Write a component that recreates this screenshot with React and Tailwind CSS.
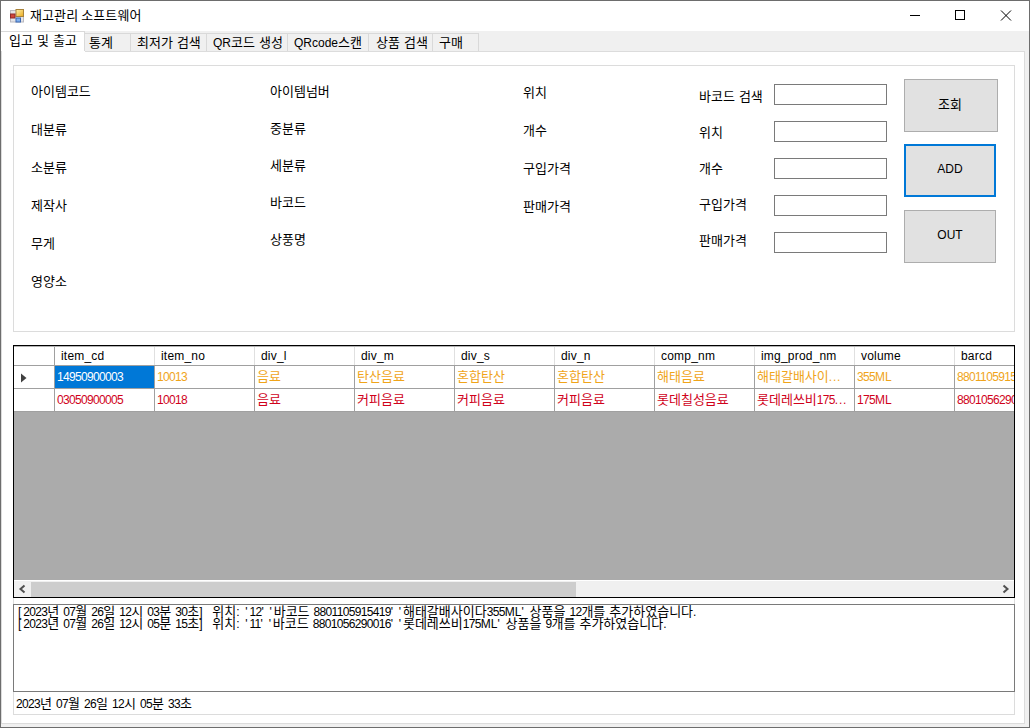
import React from 'react';

const HANGUL = /[가-힣]/;
const RUNS = /[가-힣]+|[0-9]+|[\[\]':.]+|[^가-힣0-9\[\]':.]+/g;

function runClass(run) {
  if (HANGUL.test(run)) return "font-['Noto_Sans_CJK_KR',sans-serif] text-[13px]";
  if (/[0-9]/.test(run)) return "font-['Liberation_Sans',sans-serif] text-[12px] tracking-[-0.67px]";
  if (/[.]/.test(run)) return "font-['Liberation_Sans',sans-serif] text-[12px] tracking-[0.8px]";
  if (/[\[\]':]/.test(run)) return "font-['Liberation_Sans',sans-serif] text-[12px] tracking-[1.8px]";
  return "font-['Liberation_Sans',sans-serif] text-[12px] [word-spacing:0.67px]";
}

function T({ children, className = '' }) {
  return (
    <span className={`whitespace-pre ${className}`}>
      {children.match(RUNS).map((run, i) => (
        <span key={i} className={runClass(run)}>{run}</span>
      ))}
    </span>
  );
}

const tabs = [
  ['통계', 'w-[46px] pl-[4px]'],
  ['최저가 검색', 'w-[76px] pl-[6px]'],
  ['QR코드 생성', 'w-[81px] pl-[6px]'],
  ['QRcode스캔', 'w-[81px] pl-[6px]'],
  ['상품 검색', 'w-[64px] pl-[7px]'],
  ['구매', 'w-[46px] pl-[6px]'],
];

const columns = ['item_cd', 'item_no', 'div_l', 'div_m', 'div_s', 'div_n', 'comp_nm', 'img_prod_nm', 'volume', 'barcd'];

const rows = [
  {
    color: 'text-[#f0a419]',
    cells: ['14950900003', '10013', '음료', '탄산음료', '혼합탄산', '혼합탄산', '해태음료', '해태갈배사이...', '355ML', '8801105915419'],
  },
  {
    color: 'text-[#d0021b]',
    cells: ['03050900005', '10018', '음료', '커피음료', '커피음료', '커피음료', '롯데칠성음료', '롯데레쓰비175...', '175ML', '8801056290016'],
  },
];

const searchFields = ['바코드 검색', '위치', '개수', '구입가격', '판매가격'];

const logs = [
  "[2023년 07월 26일 12시 03분 30초]  위치: '12' '바코드 8801105915419' '해태갈배사이다355ML' 상품을 12개를 추가하였습니다.",
  "[2023년 07월 26일 12시 05분 15초]  위치: '11' '바코드 8801056290016' '롯데레쓰비175ML' 상품을 9개를 추가하였습니다.",
];

function AppIcon() {
  return (
    <svg width="15" height="14" viewBox="0 0 15 14">
      <defs>
        <linearGradient id="gold" x1="0" y1="0" x2="1" y2="1">
          <stop offset="0" stopColor="#fff3b0" />
          <stop offset="1" stopColor="#e8a91c" />
        </linearGradient>
      </defs>
      <rect x="0.5" y="1.5" width="13" height="11.5" fill="#e4e4e8" stroke="#b9b9c0" />
      <rect x="6" y="0.5" width="7.5" height="7" fill="url(#gold)" stroke="#a8823a" />
      <rect x="0.5" y="5" width="4.5" height="4" fill="#d0453a" stroke="#8d2b2b" />
      <rect x="6" y="9" width="4.5" height="4" fill="#7fb0ee" stroke="#3a66b0" />
    </svg>
  );
}

function LabelColumn({ labels, className }) {
  return (
    <div className={`flex flex-col ${className}`}>
      {labels.map((label) => (
        <T key={label} className="h-[18px] leading-[18px]">{label}</T>
      ))}
    </div>
  );
}

function Button({ label, className, labelClass }) {
  return (
    <button className={`flex h-[53px] items-center justify-center bg-[#e1e1e1] ${className}`}>
      <T className={`leading-[18px] ${labelClass}`}>{label}</T>
    </button>
  );
}

export default function App() {
  return (
    <div className="flex h-[728px] w-[1030px] flex-col overflow-hidden border border-[#6d6d6d] bg-[#f0f0f0] text-black">
      <header className="flex h-[30px] shrink-0 items-center bg-white pl-[9px]">
        <div className="mb-px"><AppIcon /></div>
        <span className="mb-[3px] ml-[5px] flex-1 font-['Noto_Sans_CJK_KR',sans-serif] text-[13px] leading-[18px] tracking-[0.1px]">
          재고관리 소프트웨어
        </span>
        <svg width="120" height="12" viewBox="0 0 120 12" className="mr-[9px]" fill="none" stroke="#000" shapeRendering="crispEdges">
          <path d="M10 5.5H20" />
          <rect x="55.5" y="0.5" width="9" height="9" />
          <path d="M101 0.5L111 10.5M111 0.5L101 10.5" shapeRendering="auto" />
        </svg>
      </header>

      <nav className="flex h-[20px] shrink-0 items-end">
        <div className="h-full w-[84px] border-r border-t border-[#d9d9d9] bg-white pl-[8px]">
          <T className="block leading-[15px]">입고 및 출고</T>
        </div>
        {tabs.map(([label, size]) => (
          <div key={label} className={`h-[18px] border-r border-t border-[#d9d9d9] ${size}`}>
            <T className="block leading-[14px]">{label}</T>
          </div>
        ))}
      </nav>

      <main className="mr-[4px] flex h-[673px] shrink-0 flex-col border-x border-b border-[#dcdcdc] bg-white">
        <div className="ml-[83px] h-px shrink-0 bg-[#dcdcdc]" />
        <section className="ml-[11px] mt-[13px] flex h-[267px] w-[1002px] shrink-0 border border-[#dcdcdc]">
          <LabelColumn className="w-[239px] gap-[20px] pl-[17px] pt-[15px]" labels={['아이템코드', '대분류', '소분류', '제작사', '무게', '영양소']} />
          <LabelColumn className="w-[253px] gap-[19px] pl-[17px] pt-[15px]" labels={['아이템넘버', '중분류', '세분류', '바코드', '상풍명']} />
          <LabelColumn className="w-[176px] gap-[20px] pl-[17px] pt-[16px]" labels={['위치', '개수', '구입가격', '판매가격']} />
          <LabelColumn className="w-[92px] gap-[18px] pl-[17px] pt-[20px]" labels={searchFields} />
          <div className="flex flex-col gap-[16px] pt-[18px]">
            {searchFields.map((field) => (
              <input key={field} aria-label={field} className="h-[21px] w-[113px] border border-[#7a7a7a] bg-white" />
            ))}
          </div>
          <div className="flex flex-col items-start pl-[17px] pt-[13px]">
            <Button label="조회" className="w-[94px] border border-[#adadad]" labelClass="mb-[4px] mr-[2px]" />
            <Button label="ADD" className="mt-[12px] w-[92px] border-2 border-[#0078d7]" labelClass="mb-[5px]" />
            <Button label="OUT" className="mt-[13px] w-[92px] border border-[#adadad]" labelClass="mb-[5px]" />
          </div>
        </section>

        <section className="ml-[11px] mt-[13px] flex h-[253px] w-[1002px] shrink-0 flex-col border border-black bg-[#ababab]">
          <div className="w-[1000px] overflow-hidden">
            <div className="flex h-[20px] w-[1041px] border-b border-t border-b-[#a0a0a0] border-t-[#b4b4b4] bg-white">
              <div className="w-[41px] shrink-0 border-r border-[#a0a0a0]" />
              {columns.map((name) => (
                <div key={name} className="w-[100px] shrink-0 border-r border-[#e0e0e0] pl-[6px]">
                  <T className="block leading-[15px] tracking-[0.2px]">{name}</T>
                </div>
              ))}
            </div>
            {rows.map((row, r) => (
              <div key={r} className="flex h-[23px] w-[1041px] border-b border-[#a0a0a0] bg-white">
                <div className="flex w-[41px] shrink-0 items-center border-r border-[#a0a0a0] pl-[7px]">
                  {r === 0 && (
                    <svg width="6" height="10" viewBox="0 0 6 10" className="mt-[2px]">
                      <path d="M0 0.5L5.5 5L0 9.5Z" fill="#404040" />
                    </svg>
                  )}
                </div>
                {row.cells.map((cell, c) => (
                  <div
                    key={c}
                    className={`w-[100px] shrink-0 border-r border-[#a0a0a0] pl-[2px] ${r === 0 && c === 0 ? 'bg-[#0078d7] text-white' : row.color}`}
                  >
                    <T className="block leading-[19px]">{cell}</T>
                  </div>
                ))}
              </div>
            ))}
          </div>
          <div className="mt-auto flex h-[17px] items-center border-t border-white bg-[#f0f0f0]">
            <svg width="17" height="16" viewBox="0 0 17 16" fill="none" stroke="#505050" strokeWidth="2">
              <path d="M10.5 4.5L6.5 8L10.5 11.5" />
            </svg>
            <div className="h-[15px] w-[545px] bg-[#cdcdcd]" />
            <svg width="17" height="16" viewBox="0 0 17 16" className="ml-auto" fill="none" stroke="#505050" strokeWidth="2">
              <path d="M6.5 4.5L10.5 8L6.5 11.5" />
            </svg>
          </div>
        </section>

        <section className="ml-[11px] flex h-[117px] w-[1002px] shrink-0 flex-col border-x border-b border-[#dcdcdc]">
          <div className="-mx-px mt-[6px] h-[88px] shrink-0 border border-[#7a7a7a] pl-[4px]">
            <div className="-mt-px">
              {logs.map((line) => (
                <T key={line} className="block h-[12px] leading-[12px]">{line}</T>
              ))}
            </div>
          </div>
          <T className="mt-px block pl-[2px] leading-[18px]">2023년 07월 26일 12시 05분 33초</T>
        </section>
      </main>
    </div>
  );
}
